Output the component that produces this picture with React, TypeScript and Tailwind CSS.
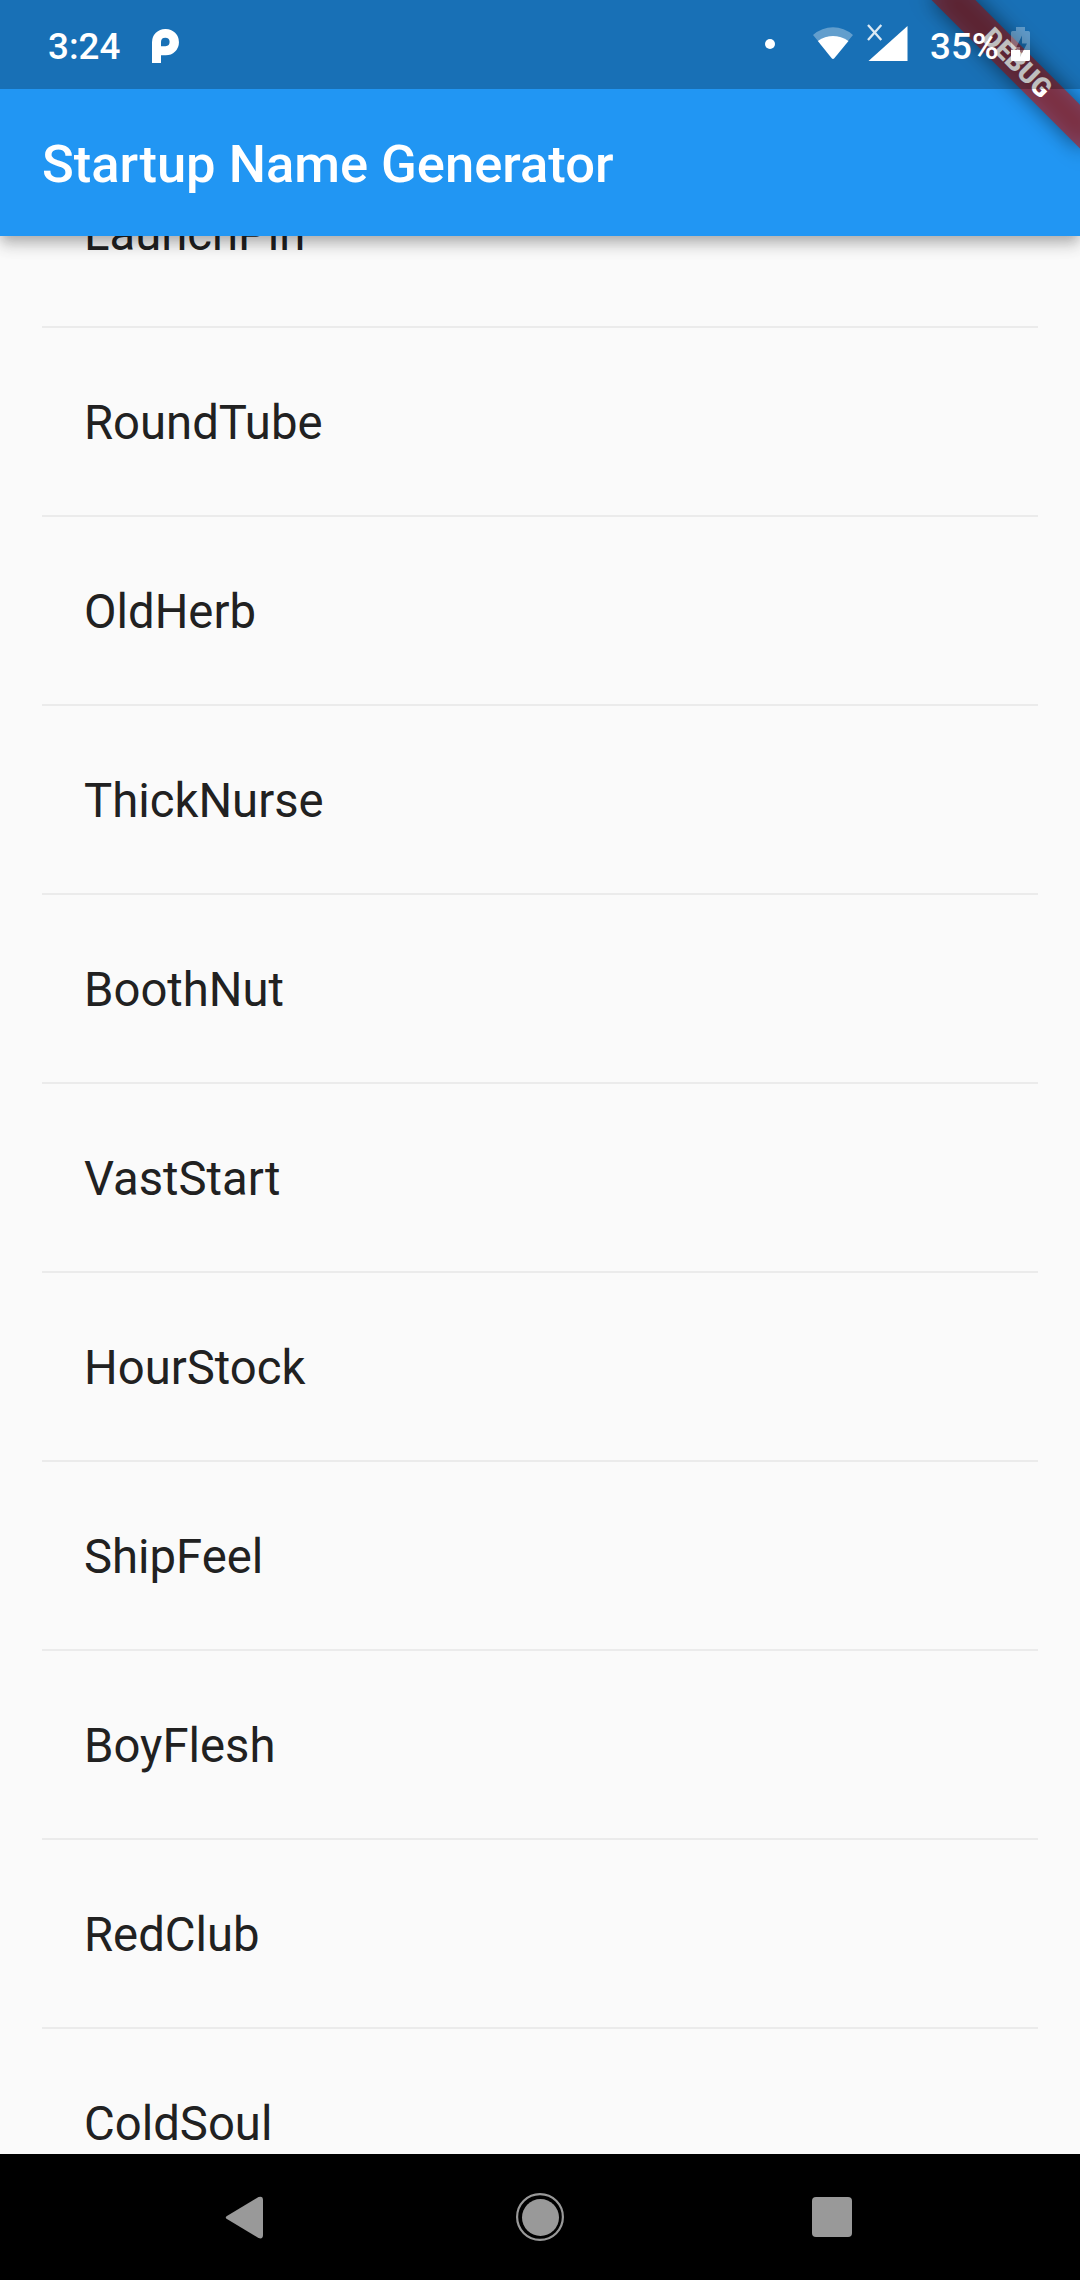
const names = [
  "LaunchPin",
  "RoundTube",
  "OldHerb",
  "ThickNurse",
  "BoothNut",
  "VastStart",
  "HourStock",
  "ShipFeel",
  "BoyFlesh",
  "RedClub",
  "ColdSoul",
];

function PIcon() {
  return (
    <svg className="mt-[29px] ml-[32px] h-[34px] w-[27px]" viewBox="0 0 27 34" fill="#fff">
      <path
        fillRule="evenodd"
        d="M0 34V13.2A13.2 13.2 0 0 1 13.200 0H13.800a13.150 13.150 0 0 1 0 26.300H9V34ZM9 17.300h4.500A4.300 4.300 0 1 0 9 13Z"
      />
    </svg>
  );
}

function WifiIcon() {
  return (
    <svg className="mt-[27px] ml-[38px] h-[33px] w-[40px]" viewBox="0 0 40 33" fill="#fff">
      <path d="M0 8Q9 0.3 20 0.3T40 8L35 14Q28.500 9 20 9T5 14Z" opacity="0.32" />
      <path d="M4.800 14Q11.500 9 20 9T35.500 14L21.300 31.200Q20 32.600 18.700 31.200Z" />
    </svg>
  );
}

function SignalIcon() {
  return (
    <svg className="mt-[24px] ml-[13px] h-[37px] w-[42px]" viewBox="0 0 42 37">
      <path d="M2.500 37L41.500 37V2Z" fill="#fff" />
      <path d="M2 1L15.300 16M15.300 1L2 16" stroke="#fff" strokeOpacity="0.85" strokeWidth="2.300" fill="none" />
    </svg>
  );
}

function BatteryIcon() {
  return (
    <svg className="mt-[27px] ml-[13px] h-[34px] w-[19px]" viewBox="0 0 19 34" fill="#fff">
      <path
        d="M5 0h9v4h3.500Q19 4 19 5.500V23H12.600L16 16.500H11V8.500L5.500 20H9V23H0V5.500Q0 4 1.500 4H5Z"
        opacity="0.3"
      />
      <path d="M9 23V30L12.600 23Z" opacity="0.300" />
      <path d="M0 23H9V30L12.600 23H19V32.500Q19 34 17.500 34H1.500Q0 34 0 32.500Z" />
    </svg>
  );
}

function StatusBar() {
  return (
    <div className="relative z-20 flex h-[89px] shrink-0 items-start bg-black/25 text-[36.75px] leading-[44px] font-medium text-white">
      <span className="mt-[25px] ml-[48px] w-[72px]">3:24</span>
      <PIcon />
      <span className="mt-[39px] ml-auto size-[10px] rounded-full bg-white" />
      <WifiIcon />
      <SignalIcon />
      <span className="mt-[25px] ml-[22px] w-[68px] whitespace-nowrap">35%</span>
      <BatteryIcon />
      <span className="w-[50px]" />
    </div>
  );
}

function DebugBanner() {
  return (
    <div className="absolute top-0 right-0 z-10 h-[236px] w-[236px] overflow-hidden">
      <div className="absolute top-0 left-full size-0 origin-top-left rotate-45">
        <div className="absolute top-[73.5px] left-[-105px] h-[31.5px] w-[210px] bg-black/50 blur-[10.4px]" />
        <div className="absolute top-[73.5px] left-[-105px] h-[31.5px] w-[210px] bg-[#b71c1c]/63 text-center text-[26.775px] leading-[31.5px] font-black text-white">
          DEBUG
        </div>
      </div>
    </div>
  );
}

function NavBar() {
  return (
    <div className="flex h-[126px] shrink-0 items-center bg-black pl-[225px]">
      <svg className="h-[43px] w-[38px]" viewBox="0 0 38 43" fill="#999">
        <path d="M1.500 20.200L33.500 1Q38 -0.500 38 4V39Q38 43.500 33.500 42L1.500 22.800Q0 21.500 1.500 20.200Z" />
      </svg>
      <svg className="ml-[253px] h-[48px] w-[48px]" viewBox="0 0 48 48">
        <circle cx="24" cy="24" r="22.900" fill="none" stroke="#999" strokeWidth="2.200" />
        <circle cx="24.500" cy="24.500" r="18.500" fill="#999" />
      </svg>
      <span className="ml-[248px] size-[40px] rounded-[4px] bg-[#999]" />
    </div>
  );
}

export default function App() {
  return (
    <div className="relative flex h-[2280px] w-[1080px] flex-col overflow-hidden bg-[#fafafa] font-[Roboto,sans-serif]">
      <header className="relative z-10 h-[236px] shrink-0 bg-[#2196f3] shadow-[0_5px_10px_-3px_rgba(0,0,0,0.16),0_10px_13px_0_rgba(0,0,0,0.16),0_3px_24px_0_rgba(0,0,0,0.08)]">
        <StatusBar />
        <h1 className="pt-[44px] pl-[42px] text-[52.5px] leading-[62px] font-medium text-white">
          Startup Name Generator
        </h1>
        <DebugBanner />
      </header>
      <main className="h-[1918px] shrink-0 overflow-hidden px-[42px]">
        <ul className="-mt-[97px]">
          {names.map((name) => (
            <li
              key={name}
              className="h-[189px] border-b-2 border-[#ebebeb] pt-[67px] pl-[42px] text-[47.25px] leading-[56px] text-[#212121]"
            >
              {name}
            </li>
          ))}
        </ul>
      </main>
      <NavBar />
    </div>
  );
}
